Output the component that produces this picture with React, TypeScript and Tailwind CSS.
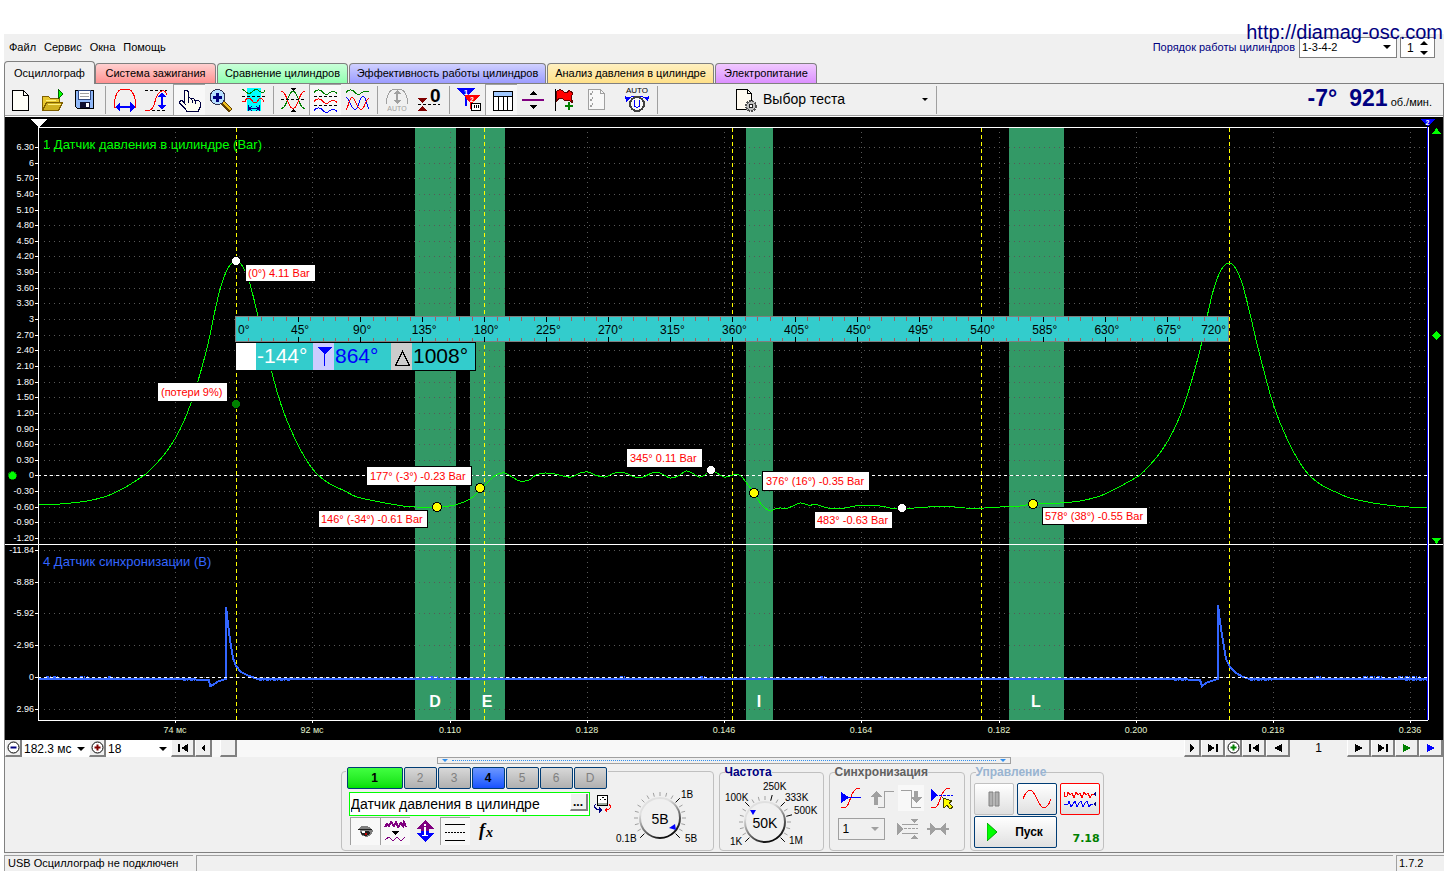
import type { ReactNode } from "react";
import clsx from "clsx";

type Point = [number, number];

// Plot geometry, in chart units
const PLOT = { left: 38, right: 1428, top: 127, split: 544, bottom: 720 };
const GREEN = "#00ff00";
const BLUE = "#3366ff";

const upperTicks = Array.from({ length: 26 }, (_, i) => {
  const value = 6.3 - i * 0.3;
  const rounded = Math.round(value * 10) / 10;
  return {
    y: Math.round(147 + i * 15.64),
    label: Number.isInteger(rounded) ? String(rounded + 0) : rounded.toFixed(2),
  };
});

const lowerTicks = [
  { y: 550, label: "-11.84" },
  { y: 582, label: "-8.88" },
  { y: 613, label: "-5.92" },
  { y: 645, label: "-2.96" },
  { y: 677, label: "0" },
  { y: 709, label: "2.96" },
];

const timeTicks = [
  { x: 175, label: "74 мс" },
  { x: 312, label: "92 мс" },
  { x: 450, label: "0.110" },
  { x: 587, label: "0.128" },
  { x: 724, label: "0.146" },
  { x: 861, label: "0.164" },
  { x: 999, label: "0.182" },
  { x: 1136, label: "0.200" },
  { x: 1273, label: "0.218" },
  { x: 1410, label: "0.236" },
];

const bands = [
  { x: 415, width: 41, label: "D", labelX: 435 },
  { x: 470, width: 35, label: "E", labelX: 487 },
  { x: 746, width: 27, label: "I", labelX: 759 },
  { x: 1009, width: 55, label: "L", labelX: 1036 },
];

const cursors = [236, 484, 732, 981, 1229];

const callouts = [
  { x: 246, y: 265, width: 69, height: 16, text: "(0°) 4.11 Bar" },
  { x: 158, y: 383, width: 69, height: 18, text: "(потери 9%)" },
  { x: 367, y: 467, width: 104, height: 18, text: "177° (-3°) -0.23 Bar" },
  { x: 319, y: 511, width: 108, height: 16, text: "146° (-34°) -0.61 Bar" },
  { x: 627, y: 449, width: 75, height: 18, text: "345° 0.11 Bar" },
  { x: 763, y: 472, width: 106, height: 18, text: "376° (16°) -0.35 Bar" },
  { x: 815, y: 512, width: 77, height: 16, text: "483° -0.63 Bar" },
  { x: 1043, y: 508, width: 104, height: 16, text: "578° (38°) -0.55 Bar" },
];

const markers = [
  { x: 236, y: 261, fill: "#ffffff" },
  { x: 236, y: 404, fill: "#008000" },
  { x: 437, y: 507, fill: "#ffff00" },
  { x: 480, y: 488, fill: "#ffff00" },
  { x: 711, y: 470, fill: "#ffffff" },
  { x: 754, y: 493, fill: "#ffff00" },
  { x: 902, y: 508, fill: "#ffffff" },
  { x: 1033, y: 504, fill: "#ffff00" },
];

// One compression stroke, relative to the top of the first peak
const stroke: Point[] = [
  [-89, 212], [-79, 202], [-69, 190], [-60, 176], [-52, 160], [-45, 142], [-38, 120], [-30, 91],
  [-25, 69], [-20, 45], [-15, 25], [-10, 11], [-5, 3], [0, 0], [5, 3], [9, 10], [14, 23],
  [22, 55], [29, 85], [36, 112], [42, 134], [48, 152], [55, 169], [64, 188], [73, 203], [82, 214],
  [94, 223],
];

const strokeAt = (x: number, y: number) => stroke.map(([dx, dy]): Point => [x + dx, y + dy]);

const pressure: Point[] = [
  [39, 505], [60, 504], [87, 501], [107, 496], [124, 488], [137, 480],
  ...strokeAt(236, 261),
  [345, 491], [357, 497], [380, 502], [403, 506], [416, 507], [437, 507], [455, 505], [470, 499],
  [479, 491], [484, 486], [492, 478], [498, 474], [505, 473], [512, 477], [520, 481], [529, 480],
  [536, 475], [545, 473], [555, 474], [563, 476], [571, 477], [580, 473], [588, 472], [595, 475],
  [605, 477], [615, 473], [625, 473], [635, 477], [643, 477], [652, 473], [660, 473], [670, 478],
  [678, 476], [686, 471], [692, 473], [699, 477], [705, 475], [711, 470], [717, 473], [724, 477],
  [730, 476], [736, 474], [741, 476], [746, 482], [754, 493], [762, 505], [770, 511], [775, 509],
  [780, 508], [788, 508], [800, 503], [808, 505], [818, 505], [828, 508], [845, 508], [855, 506],
  [880, 506], [890, 508], [902, 508], [915, 508], [928, 507], [955, 507], [965, 508], [985, 508],
  [1000, 507], [1020, 506], [1033, 504], [1060, 503], [1080, 501], [1100, 496], [1117, 488],
  [1130, 481],
  ...strokeAt(1229, 263),
  [1338, 493], [1350, 498], [1373, 503], [1396, 506], [1409, 507], [1427, 507],
];

const sync: Point[] = [
  [39, 679], [183, 679], [209, 680], [210, 686], [213, 685], [217, 682], [222, 680], [226, 679],
  [226, 607], [228, 624], [230, 640], [233, 658], [236, 666], [241, 672], [247, 675], [252, 677],
  [258, 679], [1176, 679], [1200, 680], [1202, 686], [1206, 683], [1211, 681], [1218, 679],
  [1218, 605], [1220, 622], [1223, 641], [1226, 659], [1230, 667], [1236, 673], [1243, 677],
  [1250, 679], [1427, 679],
];

const noise = [
  [183, 208, 680], [259, 290, 680], [1174, 1200, 680], [1250, 1272, 680], [1405, 1427, 680],
  [46, 58, 677], [80, 88, 677], [108, 112, 677], [430, 438, 677], [620, 626, 677], [700, 706, 677],
  [820, 826, 677], [1316, 1322, 677], [1363, 1384, 677], [1398, 1420, 677],
];

function smooth(points: Point[]) {
  let d = `M${points[0][0]} ${points[0][1]}`;
  for (let i = 0; i < points.length - 1; i++) {
    const p0 = points[i - 1] ?? points[i];
    const p1 = points[i];
    const p2 = points[i + 1];
    const p3 = points[i + 2] ?? p2;
    d += `C${p1[0] + (p2[0] - p0[0]) / 6} ${p1[1] + (p2[1] - p0[1]) / 6} ${p2[0] - (p3[0] - p1[0]) / 6} ${p2[1] - (p3[1] - p1[1]) / 6} ${p2[0]} ${p2[1]}`;
  }
  return d;
}

function Ruler() {
  // 45 degrees of crank angle
  const step = 62.06;
  const ticks = Array.from({ length: 79 }, (_, i) => i + 1);
  return (
    <g>
      <rect x="235.5" y="316.5" width="993" height="25" fill="#33cccc" stroke="#808080" />
      {ticks.map((i) => {
        const x = Math.round(236 + (i * step) / 5) + 0.5;
        const major = i % 5 === 0;
        return (
          <path
            key={i}
            d={major ? `M${x} 317v5M${x} 337v5` : `M${x} 317v4M${x} 338v3`}
            stroke={major ? "#000" : "#a06060"}
          />
        );
      })}
      <g fontSize="12" fill="#000">
        {Array.from({ length: 17 }, (_, i) => {
          if (i === 0) return <text key={i} x={238} y={334}>0°</text>;
          if (i === 16) return <text key={i} x={1226} y={334} textAnchor="end">720°</text>;
          return <text key={i} x={238 + i * step} y={334} textAnchor="middle">{i * 45}°</text>;
        })}
      </g>
      <rect x="236" y="342" width="240" height="29" fill="#000" />
      <rect x="236" y="343" width="239" height="27" fill="#33cccc" />
      <rect x="236" y="343" width="20" height="27" fill="#fff" />
      <rect x="313" y="343" width="21" height="27" fill="#ccccff" />
      <rect x="391" y="343" width="21" height="27" fill="#cccccc" />
      <path d="M317 347h15l-7 7v12h-1v-12z" fill="#0000ff" />
      <path d="M402.500 351.500l-7 14h14z" fill="none" stroke="#000" />
      <g fontSize="21">
        <text x="257" y="363" fill="#fff">-144°</text>
        <text x="335" y="363" fill="#0000ff">864°</text>
        <text x="413" y="363" fill="#000">1008°</text>
      </g>
    </g>
  );
}

function Chart() {
  const { left, right, top, split, bottom } = PLOT;
  return (
    <svg
      viewBox="5 117 1438 623"
      className="block w-full bg-black font-['Liberation_Sans',Arial,sans-serif]"
      shapeRendering="crispEdges"
      role="img"
      aria-label="Осциллограмма"
    >
      {bands.map((b) => (
        <rect key={b.label} x={b.x} y={128} width={b.width} height={592} fill="#339966" />
      ))}
      <g stroke="#585858" strokeDasharray="1 4">
        {[...upperTicks, ...lowerTicks].map((t) => (
          <path key={t.label + t.y} d={`M${left + 6} ${t.y + 0.5}H${right}`} />
        ))}
        {timeTicks.map((t) => (
          <path key={t.x} d={`M${t.x + 0.5} ${top + 5}V${bottom}`} />
        ))}
      </g>
      <path d={`M${left} 475.500H${right}`} stroke="#fff" strokeDasharray="3 3" />
      <g stroke="#ffff00" strokeDasharray="4 3">
        {cursors.map((x) => (
          <path key={x} d={`M${x + 0.5} ${top + 1}V${bottom}`} />
        ))}
      </g>
      <g fill="#fff" fontSize="16" fontWeight="bold" textAnchor="middle">
        {bands.map((b) => (
          <text key={b.label} x={b.labelX} y={707}>{b.label}</text>
        ))}
      </g>

      <path d={smooth(pressure)} fill="none" stroke={GREEN} />
      <polyline points={sync.map((p) => p.join(",")).join(" ")} fill="none" stroke={BLUE} strokeWidth="2" />
      <g stroke={BLUE} strokeWidth="2" strokeDasharray="3 1 1 2">
        {noise.map(([x1, x2, y]) => (
          <path key={x1} d={`M${x1} ${y}H${x2}`} />
        ))}
      </g>
      <path d={`M${left} 677.500H${right}`} stroke="#fff" strokeDasharray="3 3" />

      <g stroke="#fff" fill="none">
        <path d={`M${left + 0.5} ${top}V${bottom + 0.5}H${right}`} />
        <path d={`M${left} ${top + 0.5}H${right + 0.5}V${bottom}`} />
        <path d={`M5 ${split + 0.5}H1443`} />
        {[...upperTicks, ...lowerTicks].map((t) => (
          <path key={t.label + t.y} d={`M35 ${t.y + 0.5}h3`} />
        ))}
        {timeTicks.map((t) => (
          <path key={t.x} d={`M${t.x + 0.5} 721v2`} />
        ))}
      </g>
      <path d={`M1427.500 ${top}V${bottom}`} stroke="#0000ff" />

      <g fill="#fff" fontSize="9" textAnchor="end">
        {[...upperTicks, ...lowerTicks].map((t) => (
          <text key={t.label + t.y} x={34} y={t.y + 3}>{t.label}</text>
        ))}
      </g>
      <g fill="#e4f4d0" fontSize="9" textAnchor="middle">
        {timeTicks.map((t) => (
          <text key={t.x} x={t.x} y={733}>{t.label}</text>
        ))}
      </g>
      <g fontSize="13">
        <text x="43" y="149" fill={GREEN}>1 Датчик давления в цилиндре (Bar)</text>
        <text x="43" y="566" fill={BLUE}>4 Датчик синхронизации (В)</text>
      </g>

      <Ruler />

      {callouts.map((c) => (
        <g key={c.text}>
          <rect x={c.x - 1} y={c.y - 1} width={c.width + 2} height={c.height + 2} fill="#000" />
          <rect x={c.x} y={c.y} width={c.width} height={c.height} fill="#fff" />
          <text x={c.x + (c.height - 12) / 2} y={c.y + c.height / 2 + 4} fontSize="11" fill="#ff0000">
            {c.text}
          </text>
        </g>
      ))}
      {markers.map((m) => (
        <circle key={`${m.x}-${m.y}`} cx={m.x} cy={m.y} r="4.500" fill={m.fill} stroke="#000" />
      ))}

      <path d="M30 119h17l-8 8h-1z" fill="#fff" />
      <path d="M1420 119h15l-7 7h-1z" fill="#0000ff" />
      <text x="1427.500" y="125" fontSize="7" fontWeight="bold" fill="#fff" textAnchor="middle">2</text>
      <g fill={GREEN}>
        <path d="M1432 134l4.500-6 4.500 6z" />
        <path d="M1432 538l4.500 6 4.500-6z" />
        <path d="M1432 335.500l4.500-4.500 4.500 4.500-4.500 4.500z" />
        <circle cx="12.500" cy="475.500" r="4" stroke="#008000" />
      </g>
    </svg>
  );
}

const tabs = [
  { label: "Осциллограф", style: "w-[91px] h-[23px] -mb-px z-10 bg-[#f0f0f0]" },
  { label: "Система зажигания", style: "w-[121px] h-5 bg-linear-to-b from-[#ffd0d0] to-[#ff9292]" },
  { label: "Сравнение цилиндров", style: "w-[131px] h-5 bg-linear-to-b from-[#c8ffd8] to-[#90ffb0]" },
  { label: "Эффективность работы цилиндров", style: "w-[197px] h-5 bg-linear-to-b from-[#d0d0ff] to-[#9c9cff]" },
  { label: "Анализ давления в цилиндре", style: "w-[167px] h-5 bg-linear-to-b from-[#fff0c0] to-[#ffe088]" },
  { label: "Электропитание", style: "w-[102px] h-5 bg-linear-to-b from-[#f0c8ff] to-[#dc90ff]" },
];

function ToolButton({ title, active, children }: { title: string; active?: boolean; children: ReactNode }) {
  return (
    <button
      type="button"
      title={title}
      aria-pressed={active}
      className={clsx("h-[31px] w-8 shrink-0", active && "bg-[#f8f8f8] shadow-[inset_1px_1px_0_#a0a0a0]")}
    >
      <svg viewBox="0 0 32 31" className="block h-[31px] w-8" fill="none" shapeRendering="crispEdges">
        {children}
      </svg>
    </button>
  );
}

function Separator() {
  return (
    <div className="flex h-7 w-2 shrink-0 justify-center">
      <div className="w-px bg-[#a0a0a0]" />
    </div>
  );
}

function Toolbar() {
  return (
    <div className="flex h-[33px] items-center border-t border-b border-t-[#808080] border-b-[#a0a0a0] shadow-[0_1px_0_#fff]">
      <ToolButton title="Новый">
        <path d="M7.500 6.500h11l5 5v15h-16z" fill="#fffff8" stroke="#000" />
        <path d="M18.500 6.500v5h5" stroke="#000" />
      </ToolButton>
      <ToolButton title="Открыть">
        <path d="M5.500 26V12.500h6l2 2h9v5" fill="#e8c830" stroke="#806000" />
        <path d="M5.500 26.500l4-8h16l-4 8z" fill="#d0b020" stroke="#806000" />
        <path d="M9 16.500h10M11 20.500h13" stroke="#fff080" />
        <path d="M21 5l5 5-5 5z" fill="#00ff00" stroke="#006000" />
      </ToolButton>
      <ToolButton title="Сохранить">
        <path d="M6.500 6.500h18v18h-16l-2-2z" fill="#90b8f8" stroke="#000" />
        <path d="M9.500 6.500h12v9h-12z" fill="#fff" stroke="#304880" />
        <path d="M11 9.500h9M11 12.500h9" stroke="#a0a0a0" />
        <path d="M11 18h10v6H11z" fill="#101030" />
        <path d="M17 19h3v4h-3z" fill="#fff" />
      </ToolButton>
      <Separator />
      <ToolButton title="Ширина цикла">
        <path d="M7 23H5.500v-5C6 10 10 5 14 5h4c4 0 8 5 8.500 13v5H25" stroke="#ff0000" />
        <path d="M10 23h12" stroke="#0000ff" strokeWidth="2" />
        <path d="M6 23l5-5v10zM26 23l-5-5v10z" fill="#0000ff" />
      </ToolButton>
      <ToolButton title="Высота">
        <path d="M4 6.500h22M11 26.500h14" stroke="#000" strokeDasharray="3 2" />
        <path d="M4 26.500h4c4-1 5-5 6-9s3-10 8-11c2 0 3 2 4 4" stroke="#ff0000" />
        <path d="M21 11v12" stroke="#0000ff" strokeWidth="2" />
        <path d="M21 8l-4 5h8zM21 26l-4-5h8z" fill="#0000ff" />
      </ToolButton>
      <ToolButton title="Рука" active>
        <path
          d="M11.500 7.500c0-2 3.500-2 3.500 0v7c1-1 3-1 3.500 1c1-1 3-1 3.500 1c2-1 5 0 5.500 3v3l-2 4v1H14l-2-3-5-5c-1-2 1-4 3-2l2 2z"
          fill="#fffff0"
          stroke="#000040"
        />
        <path d="M15.500 15v4M19.500 16v3M22.500 17v3" stroke="#000040" />
      </ToolButton>
      <ToolButton title="Масштаб">
        <path d="M17 18l9 9" stroke="#604000" strokeWidth="5" />
        <path d="M18 18l8 8" stroke="#f0c020" strokeWidth="2" />
        <circle cx="12.500" cy="13" r="7.500" fill="#b8e0ff" stroke="#303050" strokeWidth="1" />
        <path d="M8 13h9M12.500 8.500v9" stroke="#000080" strokeWidth="3" />
      </ToolButton>
      <ToolButton title="Диапазон">
        <path d="M10 4h14v23H10z" fill="#00ffff" />
        <path d="M5 5.500c3 0 4 4 7 4s4-4 7-4 4 3 6 3 3-1 3-3" stroke="#008000" />
        <path d="M5 12.500h23" stroke="#000" strokeDasharray="3 2" />
        <path d="M5 17.500h3c2-5 5-4 7-1s4 4 6 0 4-2 6 1" stroke="#ff0000" />
        <path d="M11.500 21v6M22.500 21v6M12 24.500h10M15 22l-3 2.500 3 2.500M19 22l3 2.500-3 2.500" stroke="#000080" />
      </ToolButton>
      <Separator />
      <ToolButton title="Совместить">
        <path d="M4 24.500c7 0 6-17 12-17s5 17 12 17" stroke="#008000" />
        <path d="M4 7.500c7 0 6 17 12 17s5-17 12-17" stroke="#ff0000" />
        <path d="M4 15.500h25" stroke="#000" strokeDasharray="3 2" />
        <path d="M13 4h6l-3 3zM13 28h6l-3-3z" fill="#000" />
      </ToolButton>
      <ToolButton title="Раздельно" active>
        <path d="M5 8.500c3-4 7-3 9 0s5 2 7 0 5-1 7 1" stroke="#008000" />
        <path d="M5 17.500c3-4 7-3 9 0s5 2 7 0 5-1 7 1" stroke="#ff0000" />
        <path d="M5 26.500c3-4 7-3 9 0s5 2 7 0 5-1 7 1" stroke="#0000ff" />
        <path d="M5 12.500h23M5 21.500h23" stroke="#000" strokeDasharray="3 2" />
      </ToolButton>
      <ToolButton title="Наложить">
        <path d="M5 8.500c3-4 7-3 9 0s5 2 7 0 5-1 7-1" stroke="#008000" />
        <path d="M5 13.500c3 0 5 12 9 12s4-13 8-13 3 10 6 12" stroke="#0000ff" />
        <path d="M5 25.500c2 0 3-12 6-12s5 12 9 12 5-12 8-11" stroke="#ff0000" />
      </ToolButton>
      <Separator />
      <ToolButton title="Авто">
        <path d="M5.500 20v-3C6 9 10 5 14 5h4c4 0 8 4 8.500 12v3" stroke="#a0a0a0" />
        <path d="M16 8v10" stroke="#a0a0a0" strokeWidth="2" />
        <path d="M16 6l-4 4h8zM16 20l-4-4h8z" fill="#a0a0a0" />
        <text x="16" y="27" fontSize="7" fill="#a0a0a0" textAnchor="middle">AUTO</text>
      </ToolButton>
      <ToolButton title="Ноль">
        <path d="M5 20.500h22" stroke="#000" strokeDasharray="3 2" />
        <path d="M5 14h9l-4.500 5zM5 27h9l-4.500-5z" fill="#800000" />
        <text x="17" y="18" fontSize="19" fontWeight="bold" fill="#000">0</text>
      </ToolButton>
      <Separator />
      <ToolButton title="Линейки">
        <path d="M4 4h18l-8 9v9h-2v-9z" fill="#0000ff" />
        <path d="M12 11h15l-8 8v6h-2v-6l-4-4z" fill="#ff0000" />
        <text x="13" y="11" fontSize="8" fontWeight="bold" fill="#fff" textAnchor="middle">1</text>
        <text x="19" y="18" fontSize="7" fontWeight="bold" fill="#fff" textAnchor="middle">2</text>
        <path d="M18.500 19.500h9v7h-9z" fill="#fff" stroke="#000" />
        <path d="M21.500 21v3M23.500 21v3M25.500 21v3" stroke="#000" />
      </ToolButton>
      <ToolButton title="Таблица" active>
        <path d="M8.500 7.500h19v19h-19z" fill="#fff" stroke="#000" />
        <path d="M9 8h18v4H9z" fill="#a0c8ff" />
        <path d="M8 12.500h19M13.500 12v14M18.500 12v14M22.500 12v14" stroke="#000" />
      </ToolButton>
      <ToolButton title="Разделитель">
        <path d="M5 15h22v2H5z" fill="#800080" />
        <path d="M12 11h8l-4-4zM12 21h8l-4 4z" fill="#000" />
      </ToolButton>
      <ToolButton title="Добавить метку">
        <path d="M6.500 5v22" stroke="#000" />
        <path d="M7 8c3-4 6-2 8 0s4 0 5-2l4 3c-2 3-2 6 0 10l-4-3c-2 2-4 1-6-1s-5-1-7 3z" fill="#ff0000" stroke="#600000" />
        <path d="M16 22h8M20 18v8" stroke="#008000" strokeWidth="2" />
      </ToolButton>
      <ToolButton title="Отчёт">
        <path d="M7.500 5.500h12l4 4v16h-16z" fill="#f8f8f8" stroke="#a0a0a0" />
        <path d="M19.500 5.500v4h4M9 9.500l1 1 2-3M9 15.500l1 1 2-3M9 21.500l1 1 2-3" stroke="#a0a0a0" />
      </ToolButton>
      <div className="w-2" />
      <ToolButton title="Авто напряжение">
        <text x="16" y="9" fontSize="8" fill="#000" textAnchor="middle">AUTO</text>
        <path d="M5 16c3-5 19-5 22 0" stroke="#0000ff" />
        <path d="M4 12l1 6 4-4zM28 12l-1 6-4-4z" fill="#0000ff" />
        <circle cx="16" cy="20" r="7" fill="#f8f8f8" stroke="#404040" strokeWidth="2" />
        <path d="M13.500 16v5c0 3 5 3 5 0v-5" stroke="#0000ff" />
      </ToolButton>
      <Separator />
      <button type="button" className="ml-[71px] flex h-[31px] w-[200px] items-center text-left text-[14px]">
        <svg viewBox="0 0 26 26" className="h-[26px] w-[26px]" fill="none" shapeRendering="crispEdges">
          <path d="M4.500 2.500h11l4 4v16h-15z" fill="#fffaf0" stroke="#000" />
          <path d="M15.500 2.500v4h4" stroke="#000" />
          <circle cx="19" cy="19" r="5" fill="#c0c0c0" stroke="#505050" strokeWidth="2" strokeDasharray="2 1" />
          <circle cx="19" cy="19" r="2" fill="#fff" stroke="#202020" />
        </svg>
        <span className="ml-[5px] grow">Выбор теста</span>
        <svg viewBox="0 0 6 3" className="mr-1 h-[3px] w-[6px]">
          <path d="M0 0h6L3 3z" />
        </svg>
      </button>
      <Separator />
      <p className="ml-auto flex items-baseline pr-[11px] text-[23px] leading-7 font-bold text-[#000080]">
        <span className="mr-3">-7°</span>
        <span>921</span>
        <span className="ml-[3px] text-[11px] font-normal text-black">об./мин.</span>
      </p>
    </div>
  );
}

function Header() {
  return (
    <header className="relative">
      <a
        href="http://diamag-osc.com"
        className="absolute -top-3.5 right-px z-20 text-[20px] leading-6 text-[#000080]"
      >
        http://diamag-osc.com
      </a>
      <div className="flex h-[27px] items-center">
        <nav className="flex gap-2 pl-[5px] text-[11px]">
          {["Файл", "Сервис", "Окна", "Помощь"].map((item) => (
            <button key={item} type="button">{item}</button>
          ))}
        </nav>
        <label htmlFor="order" className="ml-auto text-[11px] text-[#000080]">
          Порядок работы цилиндров
        </label>
        <div className="relative ml-1">
          <select
            id="order"
            defaultValue="1-3-4-2"
            className="block h-[21px] w-[98px] appearance-none border border-[#808080] bg-white pl-0.5 text-[11px]"
          >
            <option>1-3-4-2</option>
            <option>1-2-4-3</option>
          </select>
          <svg viewBox="0 0 8 4" className="pointer-events-none absolute top-2 right-1.5 h-1 w-2">
            <path d="M0 0h8L4 4z" />
          </svg>
        </div>
        <div className="mr-[9px] ml-[3px] flex h-[21px] w-[35px] items-center border border-[#808080] bg-white">
          <input aria-label="Цилиндр" defaultValue="1" className="w-4 grow pl-1.5 text-[12px]" />
          <svg viewBox="0 0 8 14" className="mr-1.5 h-3.5 w-2">
            <path d="M0 4h8L4 0zM0 10h8l-4 4z" />
          </svg>
        </div>
      </div>
      <div className="flex h-[22px] items-end gap-px" role="tablist">
        {tabs.map((tab, i) => (
          <button
            key={tab.label}
            type="button"
            role="tab"
            aria-selected={i === 0}
            className={clsx(
              "relative shrink-0 rounded-t-sm border border-b-0 border-[#808080] text-center text-[11px] leading-none whitespace-nowrap first:-mr-px",
              tab.style,
            )}
          >
            {tab.label}
          </button>
        ))}
      </div>
    </header>
  );
}

function Bevel({ label, className, children }: { label: string; className?: string; children?: ReactNode }) {
  return (
    <button
      type="button"
      aria-label={label}
      className={clsx(
        "flex h-[17px] shrink-0 items-center justify-center border-r-2 border-b-2 border-l border-r-[#808080] border-b-[#808080] border-l-white bg-[#f0f0f0]",
        className,
      )}
    >
      {children}
    </button>
  );
}

function Glyph({ d, color = "#000" }: { d: string; color?: string }) {
  return (
    <svg viewBox="0 0 12 8" className="h-2 w-3" fill={color} shapeRendering="crispEdges">
      <path d={d} />
    </svg>
  );
}

function RoundSign({ color, plus }: { color: string; plus?: boolean }) {
  return (
    <svg viewBox="0 0 13 13" className="h-[13px] w-[13px]" fill="none">
      <circle cx="6.500" cy="6.500" r="5.500" fill="#fff" stroke="#000" />
      <path d={plus ? "M3.500 6.500h6M6.500 3.500v6" : "M3.500 6.500h6"} stroke={color} strokeWidth="2" />
    </svg>
  );
}

function FlatSelect({ label, value, className }: { label: string; value: string; className: string }) {
  return (
    <div className={clsx("relative h-[17px] shrink-0 bg-white", className)}>
      <select
        aria-label={label}
        defaultValue={value}
        className="block h-full w-full appearance-none pl-0.5 text-[12px] leading-none"
      >
        <option>{value}</option>
      </select>
      <svg viewBox="0 0 8 4" className="pointer-events-none absolute top-[7px] right-1 h-1 w-2">
        <path d="M0 0h8L4 4z" />
      </svg>
    </div>
  );
}

const NEXT = "M2 0l8 4-8 4z";
const PREV = "M10 0L2 4l8 4z";
const TO_END = "M1 0l7 4-7 4zM9 0h2v8H9z";
const TO_START = "M11 0L4 4l7 4zM1 0h2v8H1z";

function NavigationBar() {
  return (
    <div className="flex h-[17px]">
      <Bevel label="Уменьшить" className="w-[17px]"><RoundSign color="#000080" /></Bevel>
      <FlatSelect label="Развёртка" value="182.3 мс" className="w-[67px]" />
      <Bevel label="Увеличить" className="w-[17px]"><RoundSign color="#800000" plus /></Bevel>
      <FlatSelect label="Шаг" value="18" className="w-[65px]" />
      <Bevel label="В начало" className="w-6"><Glyph d={TO_START} /></Bevel>
      <Bevel label="Влево" className="w-[17px]"><Glyph d="M8 0L4 4l4 4z" /></Bevel>
      <div className="grow bg-[#f8f8f8] pl-2">
        <Bevel label="Позиция" className="w-[17px]" />
      </div>
      <Bevel label="Вправо" className="w-[17px]"><Glyph d="M4 0l4 4-4 4z" /></Bevel>
      <Bevel label="В конец" className="w-6"><Glyph d={TO_END} /></Bevel>
      <Bevel label="Добавить" className="w-[17px]"><RoundSign color="#008000" plus /></Bevel>
      <Bevel label="Первый кадр" className="w-6"><Glyph d={TO_START} /></Bevel>
      <Bevel label="Предыдущий кадр" className="w-6"><Glyph d={PREV} /></Bevel>
      <span className="w-[57px] text-center text-[12px] leading-[17px]">1</span>
      <Bevel label="Следующий кадр" className="w-6"><Glyph d={NEXT} /></Bevel>
      <Bevel label="Последний кадр" className="w-6"><Glyph d={TO_END} /></Bevel>
      <Bevel label="Воспроизвести" className="w-6"><Glyph d={NEXT} color="#008000" /></Bevel>
      <Bevel label="Воспроизвести кадр" className="w-6"><Glyph d={NEXT} color="#0000ff" /></Bevel>
    </div>
  );
}

const channels = [
  { label: "1", style: "w-14 bg-linear-to-b from-[#40ff40] to-[#00e000] font-bold text-black" },
  { label: "2", style: "w-[33px] bg-linear-to-b from-[#d8d8d8] to-[#b0b0b0] text-[#808080]" },
  { label: "3", style: "w-[33px] bg-linear-to-b from-[#d8d8d8] to-[#b0b0b0] text-[#808080]" },
  { label: "4", style: "w-[33px] bg-linear-to-b from-[#6c96ff] to-[#1850ff] font-bold text-black" },
  { label: "5", style: "w-[33px] bg-linear-to-b from-[#d8d8d8] to-[#b0b0b0] text-[#808080]" },
  { label: "6", style: "w-[33px] bg-linear-to-b from-[#d8d8d8] to-[#b0b0b0] text-[#808080]" },
  { label: "D", style: "w-[33px] bg-linear-to-b from-[#d8d8d8] to-[#b0b0b0] text-[#808080]" },
];

function Toggle({ title, active, children }: { title: string; active?: boolean; children: ReactNode }) {
  return (
    <button
      type="button"
      title={title}
      aria-pressed={active}
      className={clsx("h-7 w-[30px]", active && "bg-[#f8f8f8] shadow-[inset_1px_1px_0_#a0a0a0]")}
    >
      <svg viewBox="0 0 30 28" className="block h-7 w-[30px]" fill="none" shapeRendering="crispEdges">
        {children}
      </svg>
    </button>
  );
}

type DialLabel = { x: number; y: number; text: string };

function Dial({
  name, value, cx, cy, labels, major, pointer, width,
}: {
  name: string; value: string; cx: number; cy: number; width: number;
  labels: DialLabel[]; major: number[]; pointer: string;
}) {
  // Ticks run clockwise from lower left to lower right
  const ticks = Array.from({ length: 19 }, (_, i) => -135 + i * 15);
  const at = (deg: number, r: number) => {
    const a = (deg * Math.PI) / 180;
    return `${(cx + r * Math.sin(a)).toFixed(1)} ${(cy - r * Math.cos(a)).toFixed(1)}`;
  };
  return (
    <svg
      viewBox={`0 0 ${width} 76`}
      className="block h-[76px] shrink-0"
      style={{ width }}
      role="img"
      aria-label={name}
    >
      <defs>
        <linearGradient id={name} x1="0.200" y1="0" x2="0.700" y2="1">
          <stop offset="0.250" stopColor="#e0e0e0" />
          <stop offset="1" stopColor="#000" />
        </linearGradient>
      </defs>
      {ticks.map((deg) => (
        <path
          key={deg}
          d={`M${at(deg, 22)}L${at(deg, major.includes(deg) ? 28 : 26)}`}
          stroke={major.includes(deg) ? "#000" : "#a0a0a0"}
        />
      ))}
      <circle cx={cx} cy={cy} r="20" fill="#f0f0f0" stroke={`url(#${name})`} strokeWidth="2" />
      <path d={pointer} fill="#0000ff" />
      <text x={cx} y={cy + 6} fontSize="14" textAnchor="middle">{value}</text>
      <g fontSize="10">
        {labels.map((l) => (
          <text key={l.text} x={l.x} y={l.y}>{l.text}</text>
        ))}
      </g>
    </svg>
  );
}

function ChannelGroup() {
  return (
    <section className="flex h-20 w-[373px] rounded border border-[#c0c0c0]">
      <div className="-mt-[5px] ml-1 w-[268px] shrink-0">
        <div className="flex w-[262px] gap-px bg-[#f0f0f0] pl-px">
          {channels.map((c) => (
            <button
              key={c.label}
              type="button"
              className={clsx("h-[22px] rounded-xs border border-[#003c74] text-[12px] leading-none", c.style)}
            >
              {c.label}
            </button>
          ))}
        </div>
        <div className="mt-[3px] ml-[3px] flex items-center gap-1">
          <div className="flex h-6 w-[241px] border border-[#00ff00] bg-white p-px">
            <input
              aria-label="Название канала"
              defaultValue="Датчик давления в цилиндре"
              className="min-w-0 grow text-[14px]"
            />
            <Bevel label="Выбрать датчик" className="h-5 w-[18px]">
              <span className="text-[12px] leading-none font-bold">...</span>
            </Bevel>
          </div>
          <button type="button" title="Инверсия">
            <svg viewBox="0 0 18 20" className="h-5 w-[18px]" fill="none" shapeRendering="crispEdges">
              <path d="M3.500 1.500h10v10h-10z" fill="#fff" stroke="#000" />
              <path d="M4 9h9v2H4z" fill="#a0b0a0" />
              <path d="M6 5.500h1M8 3.500h2M10 5.500h2" stroke="#000" />
              <path d="M2 10c-3 3 0 6 4 6" stroke="#000080" />
              <path d="M5 13l3 3-3 3z" fill="#000080" />
              <path d="M15 10c3 3 1 6-3 6" stroke="#ff0000" />
              <path d="M13 13l-3 3 3 3z" fill="#ff0000" />
            </svg>
          </button>
        </div>
        <div className="mt-px ml-1 flex">
          <Toggle title="Видимость" active>
            <path d="M9 11c2-3 9-3 12 0l2 3-2 4c-3 3-9 2-10-1z" fill="#808080" />
            <path d="M8 12h14M11 16c3-2 7-2 9 0-2 3-7 3-9 0z" fill="#202020" stroke="#202020" />
            <path d="M12 14h3v2h-3z" fill="#fff" />
            <path d="M15 16h2v2h-2z" fill="#c00000" />
          </Toggle>
          <Toggle title="Фильтр" active>
            <path d="M5 10l2-3 2 2 2-4 3 4 2-4 2 5 3-4 2 3 1-4 2 5" stroke="#800080" strokeWidth="2" />
            <path d="M11 14h8l-4 4z" fill="#000" />
            <path d="M5 23l4-3 4 4 4-4 4 4 4-4" stroke="#800080" />
          </Toggle>
          <Toggle title="Сдвиг">
            <path d="M15 3l9 9h-5v3h-8v-3H6z" fill="#800080" />
            <path d="M15 25l9-9h-5v-2h-8v2H6z" fill="#0000ff" />
            <path d="M14 10h2v9h-2zM14 7h2v2h-2zM12 18h6v1h-6z" fill="#fff" />
          </Toggle>
          <Toggle title="Сетка" active>
            <path d="M5 7.500h20M5 23.500h20" stroke="#000" />
            <path d="M5 15.500h20" stroke="#000" strokeDasharray="2 1" />
          </Toggle>
          <Toggle title="Функция">
            <text x="9" y="19" fontFamily="Liberation Serif, serif" fontSize="18" fontStyle="italic" fontWeight="bold" fill="#000">f</text>
            <text x="16" y="20" fontFamily="Liberation Serif, serif" fontSize="14" fontStyle="italic" fontWeight="bold" fill="#000">x</text>
          </Toggle>
        </div>
      </div>
      <Dial
        name="voltage"
        value="5В"
        width={98}
        cx={46}
        cy={46}
        major={[-135, 45, 135]}
        pointer="M55 56l6-4 1 6z"
        labels={[
          { x: 2, y: 70, text: "0.1В" },
          { x: 67, y: 26, text: "1В" },
          { x: 71, y: 70, text: "5В" },
        ]}
      />
    </section>
  );
}

function Group({ title, className, legend, children }: { title: string; className: string; legend: string; children: ReactNode }) {
  return (
    <fieldset className={clsx("h-[86px] min-w-0 rounded border border-[#c0c0c0]", className)}>
      <legend className={clsx("ml-[5px] text-[12px] leading-[14px] font-bold", legend)}>{title}</legend>
      {children}
    </fieldset>
  );
}

function SyncButton({ title, children }: { title: string; children: ReactNode }) {
  return (
    <button type="button" title={title} className="h-[26px] w-[30px]">
      <svg viewBox="0 0 30 26" className="block h-[26px] w-[30px]" fill="none" shapeRendering="crispEdges">
        {children}
      </svg>
    </button>
  );
}

function XpButton({ title, className, children }: { title: string; className: string; children: ReactNode }) {
  return (
    <button
      type="button"
      title={title}
      className={clsx("flex items-center justify-center rounded-xs border bg-linear-to-b from-white to-[#e0e0e0]", className)}
    >
      {children}
    </button>
  );
}

function ControlPanel() {
  return (
    <div className="flex h-[95px] flex-col items-center">
      <div className="flex h-[7px] w-[574px] items-center justify-between border border-[#a0a0a0] px-1">
        <svg viewBox="0 0 6 3" className="h-[3px] w-1.5"><path d="M0 0h6L3 3z" fill="#3090f0" /></svg>
        <div className="mx-1 grow border-t border-dotted border-[#3090f0]" />
        <svg viewBox="0 0 6 3" className="h-[3px] w-1.5"><path d="M0 0h6L3 3z" fill="#3090f0" /></svg>
      </div>
      <div className="mt-px flex h-[86px] items-end gap-[5px] pr-1">
        <ChannelGroup />
        <Group title="Частота" className="w-[105px]" legend="text-[#000080]">
          <div className="-mt-[5px]">
            <Dial
              name="frequency"
              value="50K"
              width={102}
              cx={45}
              cy={48}
              major={[-135, -45, 15, 45, 75, 135]}
              pointer="M30 36h6l-3 5z"
              labels={[
                { x: 5, y: 27, text: "100K" },
                { x: 43, y: 16, text: "250K" },
                { x: 65, y: 27, text: "333K" },
                { x: 74, y: 40, text: "500K" },
                { x: 10, y: 71, text: "1K" },
                { x: 69, y: 70, text: "1M" },
              ]}
            />
          </div>
        </Group>
        <Group title="Синхронизация" className="w-[136px]" legend="text-[#606060]">
          <div className="mt-1.5 flex pl-1.5">
            <SyncButton title="Уровень">
              <path d="M5 22l3 1c7 0 5-20 16-20" stroke="#ff0000" />
              <path d="M5 12.500h20" stroke="#0000ff" />
              <path d="M5 7l8 5.500L5 18z" fill="#0000ff" />
            </SyncButton>
            <SyncButton title="Фронт">
              <path d="M12 22.500h6v-16h10" stroke="#a0a0a0" />
              <path d="M10 6l6 6h-4v8H8v-8H4z" fill="#a0a0a0" />
            </SyncButton>
            <SyncButton title="Спад">
              <path d="M2 0h26v26H2z" fill="#f8f8f8" />
              <path d="M5 5.500h10v17h10" stroke="#a0a0a0" />
              <path d="M20 18l-6-6h4V6h4v6h4z" fill="#a0a0a0" />
            </SyncButton>
            <SyncButton title="Указать">
              <path d="M5 22l3 1c7 0 5-20 16-20" stroke="#ff0000" />
              <path d="M5 10.500h22" stroke="#0000ff" strokeDasharray="3 1" />
              <path d="M5 4l7 6-7 6z" fill="#0000ff" />
              <path d="M17 13l9 3-3 2 4 4-3 2-3-4-3 3z" fill="#ffff00" stroke="#404000" />
            </SyncButton>
          </div>
          <div className="mt-[7px] flex pl-2">
            <div className="relative">
              <select
                aria-label="Канал синхронизации"
                defaultValue="1"
                className="block h-[22px] w-[47px] appearance-none border border-[#a0a0a0] bg-[#f0f0f0] pl-1 text-[12px]"
              >
                <option>1</option>
                <option>2</option>
              </select>
              <svg viewBox="0 0 8 4" className="pointer-events-none absolute top-[9px] right-1.5 h-1 w-2">
                <path d="M0 0h8L4 4z" fill="#a0a0a0" />
              </svg>
            </div>
            <div className="-mt-0.5 ml-2 flex">
              <SyncButton title="Гистерезис">
                <path d="M4 7l6 6-6 6z" fill="#a0a0a0" />
                <path d="M9 8.500h16M9 17.500h16" stroke="#a0a0a0" />
                <path d="M11 12.500h14" stroke="#a0a0a0" strokeDasharray="3 1" />
                <path d="M17 3h8l-4 4zM17 23h8l-4-4z" fill="#a0a0a0" />
              </SyncButton>
              <SyncButton title="Задержка">
                <path d="M7 7l7 6-7 6zM23 7l-7 6 7 6z" fill="#a0a0a0" />
                <path d="M4 13h22" stroke="#a0a0a0" strokeWidth="2" />
              </SyncButton>
            </div>
          </div>
        </Group>
        <Group title="Управление" className="w-[134px]" legend="text-[#99b4d1]">
          <div className="mt-1 ml-[3px] flex gap-[3px]">
            <XpButton title="Пауза" className="h-8 w-10 border-[#c0c0c0]">
              <svg viewBox="0 0 12 16" className="h-4 w-3">
                <path d="M1 1h4v14H1zM7 1h4v14H7z" fill="#b0b0b0" stroke="#808080" />
              </svg>
            </XpButton>
            <XpButton title="Один кадр" className="h-8 w-10 border-[#003c74]">
              <svg viewBox="0 0 30 20" className="h-5 w-[30px]" fill="none" shapeRendering="crispEdges">
                <path d="M1 10C5-1 10-2 15 10s10 11 14 0" stroke="#ff0000" />
              </svg>
            </XpButton>
            <XpButton title="Лента" className="h-8 w-10 border-[#ff0000]">
              <svg viewBox="0 0 34 20" className="h-5 w-[34px]" fill="none" shapeRendering="crispEdges">
                <path d="M1 3v4h3l1-4 2 3 2-2 2 5 2-6 2 3 2-2 2 5 2-6 2 3 2-2 2 5 2-4h2" stroke="#ff0000" />
                <path d="M1 15h4l1-3 2 6 2-3 2-3 2 6 2-4 2-2 2 6 2-4 2-2 2 6 2-3h2" stroke="#0000ff" />
                <path d="M33 2v6l-3-3zM33 12v6l-3-3z" fill="#000080" />
              </svg>
            </XpButton>
          </div>
          <div className="mt-px ml-[3px] flex">
            <XpButton title="Пуск" className="h-8 w-[83px] border-[#003c74]">
              <svg viewBox="0 0 10 18" className="mr-[18px] h-[18px] w-2.5">
                <path d="M0 0l10 9-10 9z" fill="#00ff00" stroke="#00a000" />
              </svg>
              <span className="text-[12px] font-bold">Пуск</span>
            </XpButton>
            <output className="mt-[15px] ml-4 font-['DejaVu_Sans',sans-serif] text-[11px] leading-4 font-bold text-[#008000]">7.18</output>
          </div>
        </Group>
      </div>
    </div>
  );
}

function App() {
  return (
    <div className="min-h-screen bg-white pt-[34px] pr-3 pl-1 font-['Liberation_Sans',Arial,sans-serif] text-black">
      <div className="bg-[#f0f0f0]">
        <Header />
        <main className="border-r border-b border-l border-[#808080]">
          <Toolbar />
          <div className="mt-px">
            <Chart />
          </div>
          <NavigationBar />
          <ControlPanel />
        </main>
        <footer className="flex gap-[3px] pt-0.5 text-[11px] leading-[15px]">
          <p className="w-[189px] border-t border-l border-[#a0a0a0] pl-[3px] whitespace-nowrap">
            USB Осциллограф не подключен
          </p>
          <p className="grow border-t border-l border-[#a0a0a0]" />
          <p className="w-12 border-t border-l border-[#a0a0a0] pl-0.5">1.7.2</p>
        </footer>
      </div>
    </div>
  );
}

export default App;
